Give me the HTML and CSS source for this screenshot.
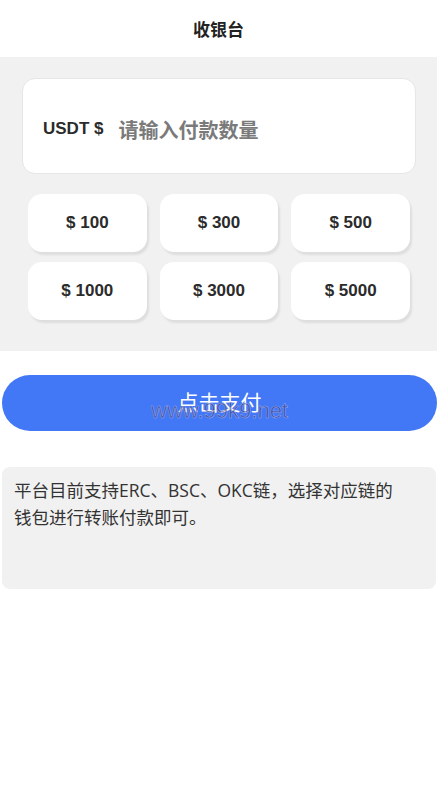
FILE: index.html
```html
<!DOCTYPE html>
<html lang="zh-CN">
<head>
<meta charset="utf-8">
<meta name="viewport" content="width=device-width, initial-scale=1">
<title>收银台</title>
<link rel="stylesheet" href="styles.css">
</head>
<body>
  <header class="topbar">收银台</header>
  <section class="panel">
    <div class="amount-card">
      <span class="currency">USDT $</span>
      <input class="amount-input" type="text" placeholder="请输入付款数量">
    </div>
    <div class="presets">
      <button class="preset">$ 100</button>
      <button class="preset">$ 300</button>
      <button class="preset">$ 500</button>
      <button class="preset">$ 1000</button>
      <button class="preset">$ 3000</button>
      <button class="preset">$ 5000</button>
    </div>
  </section>
  <button class="pay"><span class="pay-label">点击支付</span><span class="watermark">www.99k9.net</span></button>
  <div class="notice">平台目前支持ERC、BSC、OKC链，选择对应链的钱包进行转账付款即可。</div>
</body>
</html>
```
FILE: styles.css
```css
* { box-sizing: border-box; }
body {
  margin: 0;
  background: #fff;
  font-family: "Liberation Sans", "Noto Sans CJK SC", sans-serif;
  color: #333;
}
.topbar {
  height: 57px;
  display: flex;
  align-items: center;
  justify-content: center;
  font-family: "Noto Sans CJK SC", sans-serif;
  font-weight: 700;
  font-size: 17px;
  color: #222;
}
.panel {
  background: #f1f1f1;
  padding: 21px 21px 31px 22px;
}
.amount-card {
  height: 96px;
  background: #fff;
  border: 1px solid #e6e6e6;
  border-radius: 13px;
  display: flex;
  align-items: center;
  padding: 6px 20px 0 20px;
}
.currency {
  font-weight: 700;
  font-size: 17px;
  color: #2b2b2b;
  white-space: nowrap;
}
.amount-input {
  border: none;
  outline: none;
  background: transparent;
  margin-left: 15px;
  padding: 0;
  flex: 1;
  min-width: 0;
  font-family: "Noto Sans CJK SC", sans-serif;
  font-size: 20px;
  font-weight: 700;
  color: #333;
}
.amount-input::placeholder { color: #7a7a7a; }
.presets {
  margin: 20px 6px 0 6px;
  display: grid;
  grid-template-columns: repeat(3, 1fr);
  column-gap: 13px;
  row-gap: 10px;
}
.preset {
  height: 58px;
  border: none;
  background: #fff;
  border-radius: 14px;
  box-shadow: 2px 3px 2px #dedede;
  font-family: "Liberation Sans", sans-serif;
  font-weight: 700;
  font-size: 17px;
  color: #2b2b2b;
  padding: 0;
}
.pay {
  position: relative;
  display: block;
  margin: 24px 0 0 2px;
  width: 435px;
  height: 56px;
  border: none;
  border-radius: 28px;
  background: #4277f5;
  color: #fff;
  font-family: "Noto Sans CJK SC", sans-serif;
  font-size: 21px;
  padding: 0 0 4px 0;
}
.watermark {
  position: absolute;
  left: 0;
  right: 0;
  top: 24px;
  text-align: center;
  font-family: "Liberation Sans", sans-serif;
  font-size: 22px;
  line-height: 24px;
  color: rgba(60, 60, 130, 0.6);
  -webkit-text-stroke: 0.5px rgba(230, 230, 255, 0.5);
  pointer-events: none;
}
.notice {
  margin: 36px 1px 0 2px;
  height: 122px;
  background: #f1f1f1;
  border-radius: 8px;
  padding: 10px 26px 0 12px;
  font-family: "Open Sans", "Noto Sans CJK SC", sans-serif;
  font-size: 17.5px;
  line-height: 27px;
  color: #333;
}
```
